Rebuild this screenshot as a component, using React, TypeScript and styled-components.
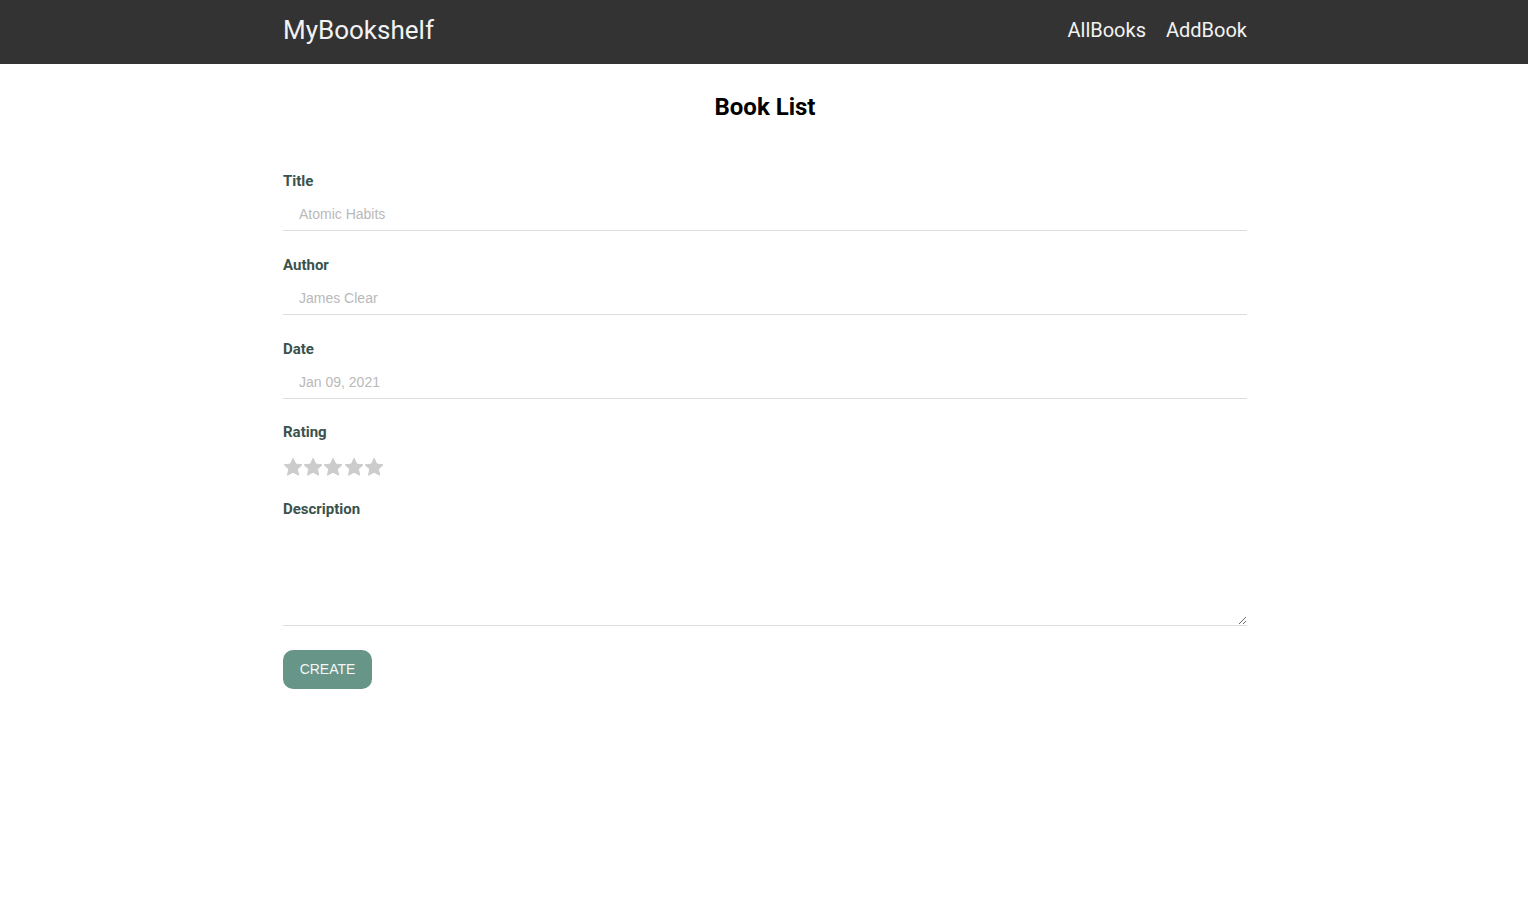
import React from "react";
import styled, { createGlobalStyle } from "styled-components";

const Global = createGlobalStyle`
  html, body { margin: 0; padding: 0; background: #fff; }
  body { font-family: Roboto, "Liberation Sans", sans-serif; }
  * { box-sizing: border-box; }
`;

const NavBar = styled.nav`
  height: 64px;
  background: #333333;
`;

const NavInner = styled.div`
  width: 966px;
  height: 100%;
  margin: 0 auto;
  padding: 0 0 4px 2px;
  display: flex;
  align-items: center;
  justify-content: space-between;
`;

const Logo = styled.a`
  font-family: Roboto, sans-serif;
  font-size: 26px;
  color: #f2f2f2;
  text-decoration: none;
`;

const Links = styled.div`
  display: flex;
  gap: 20px;
`;

const NavLink = styled.a`
  font-family: Roboto, sans-serif;
  font-size: 20px;
  color: #f2f2f2;
  text-decoration: none;
`;

const Main = styled.main`
  width: 966px;
  margin: 0 auto;
  padding-left: 2px;
`;

const Heading = styled.h1`
  margin: 29px 0 51px;
  text-align: center;
  font-family: Roboto, sans-serif;
  font-size: 24px;
  line-height: 28px;
  font-weight: 700;
  color: #000;
`;

const Form = styled.form`
  display: flex;
  flex-direction: column;
`;

const Label = styled.label`
  display: block;
  font-family: Roboto, sans-serif;
  font-size: 15px;
  line-height: 18px;
  font-weight: 700;
  color: #3a524d;
`;

const Field = styled.div<{ $gap?: number; $after?: number }>`
  display: flex;
  flex-direction: column;
  gap: ${(p) => p.$gap ?? 9}px;
  margin-bottom: ${(p) => p.$after ?? 25}px;
`;

const Input = styled.input`
  width: 100%;
  height: 32px;
  padding: 0 16px 1px;
  border: none;
  border-bottom: 1px solid #dddddd;
  outline: none;
  font-family: "Liberation Sans", Arial, sans-serif;
  font-size: 14px;
  color: #333;
  &::placeholder { color: #b9b9b9; }
`;

const TextArea = styled.textarea`
  width: 100%;
  height: 99px;
  padding: 8px 16px;
  border: none;
  border-bottom: 1px solid #dddddd;
  outline: none;
  font-family: "Liberation Sans", Arial, sans-serif;
  font-size: 14px;
`;

const Stars = styled.div`
  display: flex;
  height: 20px;
`;

const Button = styled.button`
  align-self: flex-start;
  width: 89px;
  height: 39px;
  border: none;
  border-radius: 10px;
  background: #679587;
  color: #f4f7f6;
  font-family: "Liberation Sans", Arial, sans-serif;
  font-size: 14px;
  padding: 0 0 2px;
  cursor: pointer;
`;

const Star = () => (
  <svg width="20.2" height="20" viewBox="0 0 24 24">
    <path
      d="M12 1.6l3.2 6.9 7.5.9-5.5 5.1 1.5 7.4L12 18.2l-6.7 3.7 1.5-7.4-5.5-5.1 7.5-.9z"
      fill="#cccccc"
      stroke="#cccccc"
      strokeWidth="1.2"
      strokeLinejoin="round"
    />
  </svg>
);

export default function App() {
  return (
    <>
      <Global />
      <NavBar>
        <NavInner>
          <Logo href="#">MyBookshelf</Logo>
          <Links>
            <NavLink href="#">AllBooks</NavLink>
            <NavLink href="#">AddBook</NavLink>
          </Links>
        </NavInner>
      </NavBar>
      <Main>
        <Heading>Book List</Heading>
        <Form onSubmit={(e) => e.preventDefault()}>
          <Field>
            <Label>Title</Label>
            <Input placeholder="Atomic Habits" />
          </Field>
          <Field>
            <Label>Author</Label>
            <Input placeholder="James Clear" />
          </Field>
          <Field $after={24}>
            <Label>Date</Label>
            <Input placeholder="Jan 09, 2021" />
          </Field>
          <Field $gap={16} $after={23}>
            <Label>Rating</Label>
            <Stars>
              {[0, 1, 2, 3, 4].map((i) => (
                <Star key={i} />
              ))}
            </Stars>
          </Field>
          <Field $after={24}>
            <Label>Description</Label>
            <TextArea />
          </Field>
          <Button type="submit">CREATE</Button>
        </Form>
      </Main>
    </>
  );
}
